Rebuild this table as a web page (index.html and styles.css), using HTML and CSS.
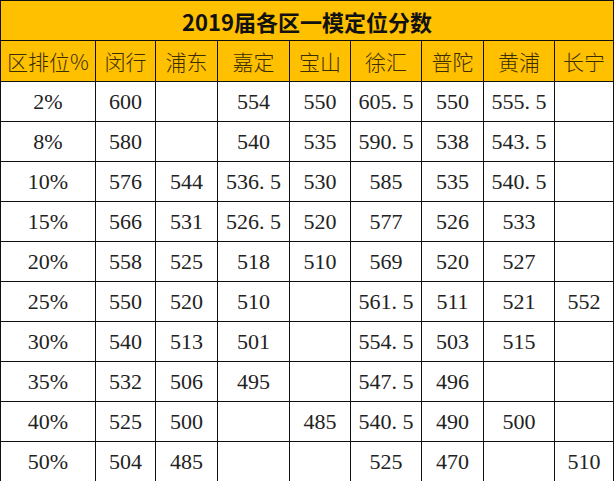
FILE: index.html
```html
<!DOCTYPE html>
<html lang="zh-CN">
<head>
<meta charset="utf-8">
<title>2019届各区一模定位分数</title>
<link rel="stylesheet" href="styles.css">
</head>
<body>
<table class="scores">
  <colgroup>
    <col class="c-rank">
    <col class="c-60">
    <col class="c-62">
    <col class="c-72">
    <col class="c-61">
    <col class="c-71">
    <col class="c-62">
    <col class="c-71">
    <col class="c-59">
  </colgroup>
  <thead>
    <tr class="title-row"><th colspan="9" class="title">2019届各区一模定位分数</th></tr>
    <tr class="head-row">
      <th>区排位%</th><th>闵行</th><th>浦东</th><th>嘉定</th><th>宝山</th><th>徐汇</th><th>普陀</th><th>黄浦</th><th>长宁</th>
    </tr>
  </thead>
  <tbody>
    <tr><td>2%</td><td>600</td><td></td><td>554</td><td>550</td><td>605<span class="pt">.</span>5</td><td>550</td><td>555<span class="pt">.</span>5</td><td></td></tr>
    <tr><td>8%</td><td>580</td><td></td><td>540</td><td>535</td><td>590<span class="pt">.</span>5</td><td>538</td><td>543<span class="pt">.</span>5</td><td></td></tr>
    <tr><td>10%</td><td>576</td><td>544</td><td>536<span class="pt">.</span>5</td><td>530</td><td>585</td><td>535</td><td>540<span class="pt">.</span>5</td><td></td></tr>
    <tr><td>15%</td><td>566</td><td>531</td><td>526<span class="pt">.</span>5</td><td>520</td><td>577</td><td>526</td><td>533</td><td></td></tr>
    <tr><td>20%</td><td>558</td><td>525</td><td>518</td><td>510</td><td>569</td><td>520</td><td>527</td><td></td></tr>
    <tr><td>25%</td><td>550</td><td>520</td><td>510</td><td></td><td>561<span class="pt">.</span>5</td><td>511</td><td>521</td><td>552</td></tr>
    <tr><td>30%</td><td>540</td><td>513</td><td>501</td><td></td><td>554<span class="pt">.</span>5</td><td>503</td><td>515</td><td></td></tr>
    <tr><td>35%</td><td>532</td><td>506</td><td>495</td><td></td><td>547<span class="pt">.</span>5</td><td>496</td><td></td><td></td></tr>
    <tr><td>40%</td><td>525</td><td>500</td><td></td><td>485</td><td>540<span class="pt">.</span>5</td><td>490</td><td>500</td><td></td></tr>
    <tr><td>50%</td><td>504</td><td>485</td><td></td><td></td><td>525</td><td>470</td><td></td><td>510</td></tr>
  </tbody>
</table>
</body>
</html>
```
FILE: styles.css
```css
html, body {
  margin: 0;
  padding: 0;
  background: #ffffff;
}

.scores {
  border-collapse: collapse;
  table-layout: fixed;
  width: 614px;
  color: #1a1a1a;
}

.c-rank { width: 95px; }
.c-60 { width: 60px; }
.c-62 { width: 62px; }
.c-72 { width: 72px; }
.c-61 { width: 61px; }
.c-71 { width: 71px; }
.c-59 { width: 59px; }

.scores th,
.scores td {
  border: 1px solid #111111;
  padding: 0;
  text-align: center;
  vertical-align: middle;
  white-space: nowrap;
}

.title-row { height: 40px; }
.head-row { height: 41px; }
.scores tbody tr { height: 40px; }

.title {
  background: #ffc000;
  font-family: "Noto Sans CJK SC", "Liberation Sans", sans-serif;
  font-weight: 700;
  font-size: 22px;
  color: #111111;
}

.head-row th {
  background: #ffc000;
  font-family: "Noto Sans CJK SC", "Liberation Serif", serif;
  font-weight: 300;
  font-size: 21px;
  color: #3a2e00;
}

.scores td {
  font-family: "Liberation Serif", "Noto Sans CJK SC", serif;
  font-size: 22px;
  color: #222222;
}

.pt {
  display: inline-block;
  width: 11px;
  text-align: left;
}
```
